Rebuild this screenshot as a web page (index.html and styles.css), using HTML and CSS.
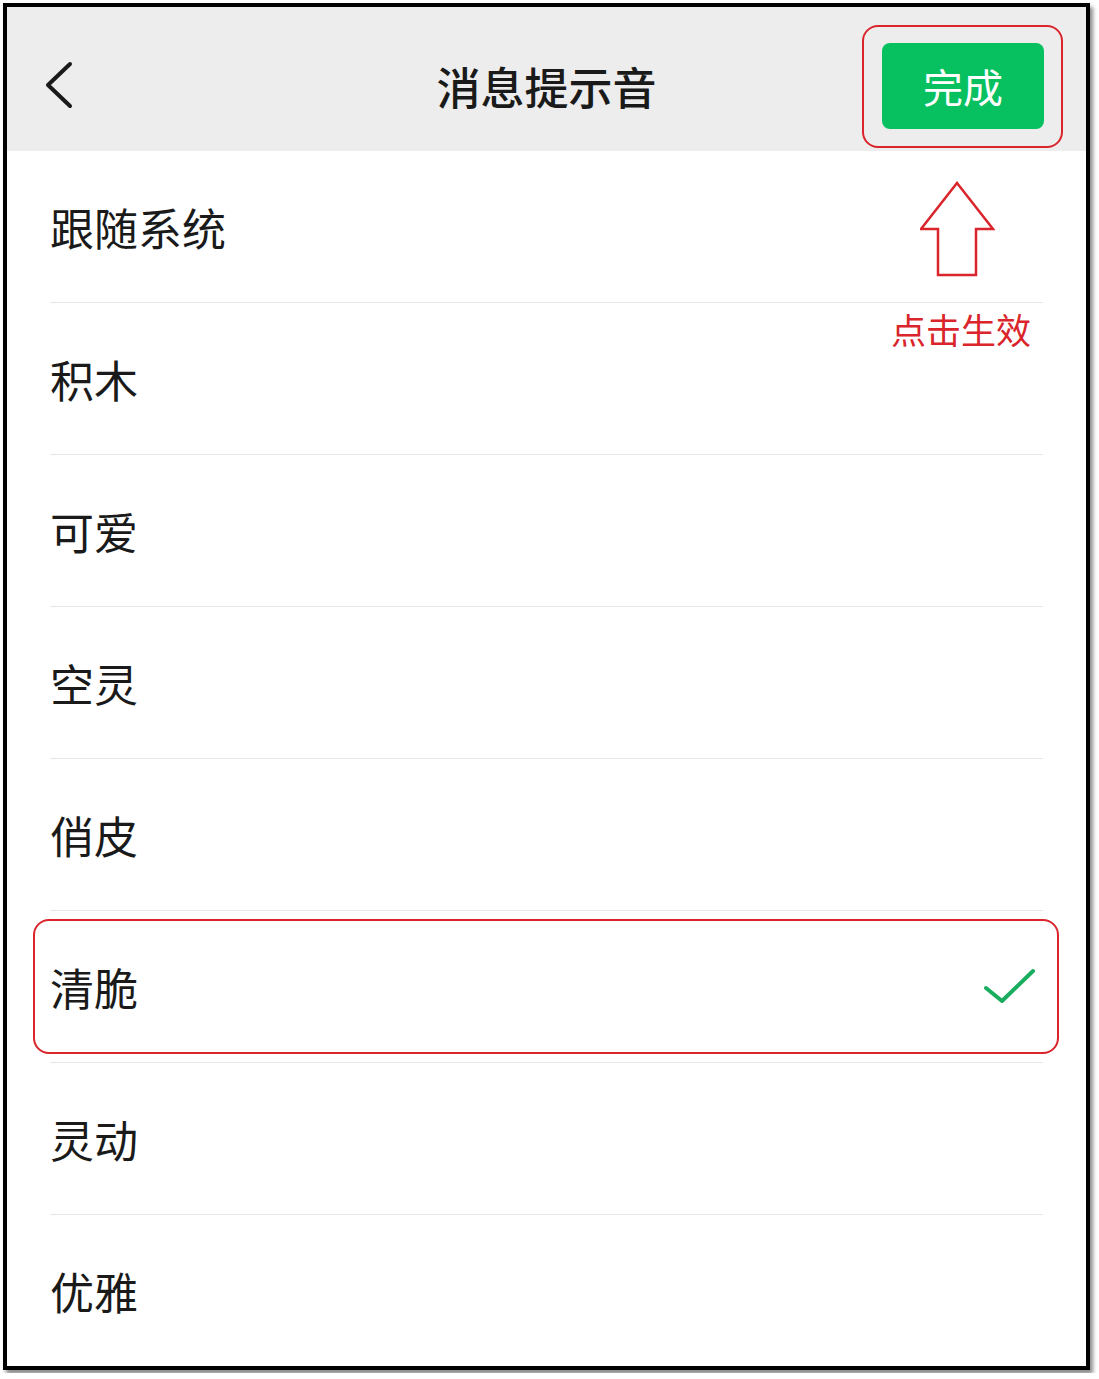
FILE: index.html
```html
<!DOCTYPE html>
<html lang="zh-CN">
<head>
    <meta charset="UTF-8">
    <meta name="viewport" content="width=device-width, initial-scale=1.0">
    <title>消息提示音</title>
    <link rel="stylesheet" href="styles.css">
</head>
<body>
    <div class="phone">
        <div class="header">
            <span class="back">
                <svg width="30" height="50" viewBox="0 0 30 50">
                    <polyline points="25,3 3,24 25,45" fill="none" stroke="#1a1a1a" stroke-width="4" stroke-linecap="round" stroke-linejoin="round"/>
                </svg>
            </span>
            <h1 class="title">消息提示音</h1>
            <span class="done-mark">
                <button class="done">完成</button>
            </span>
        </div>

        <div class="list">
            <!-- tip under the done button -->
            <div class="tip">
                <svg width="80" height="98" viewBox="0 0 80 98">
                    <polygon points="37,2 73,48 56,48 56,94 18,94 18,48 1,48" fill="none" stroke="#d9252b" stroke-width="2.5" stroke-linejoin="miter"/>
                </svg>
                <span class="tip-text">点击生效</span>
            </div>

            <div class="item">跟随系统</div>
            <div class="item">积木</div>
            <div class="item">可爱</div>
            <div class="item">空灵</div>
            <div class="item">俏皮</div>
            <div class="item selected">
                <span>清脆</span>
                <svg class="check" width="54" height="40" viewBox="0 0 54 40">
                    <polyline points="3,20 19,33 50,3" fill="none" stroke="#1aad5f" stroke-width="4" stroke-linecap="round" stroke-linejoin="round"/>
                </svg>
            </div>
            <div class="item">灵动</div>
            <div class="item">优雅</div>
        </div>
    </div>
</body>
</html>
```

FILE: styles.css
```css
body {
    margin: 0;
    padding: 0;
    background-color: #fff;
    font-family: "Noto Sans CJK SC", "Noto Sans", sans-serif;
    color: #1a1a1a;
}

.phone {
    width: 1079px;
    margin: 3px;
    border: 4px solid #000;
    background-color: #fff;
    box-shadow: 3px 4px 4px rgba(0, 0, 0, 0.45);
}

.header {
    height: 144px;
    box-sizing: border-box;
    padding-top: 14px;
    background-color: #ededed;
    display: grid;
    grid-template-columns: 1fr auto 1fr;
    align-items: center;
}

.back {
    padding-left: 38px;
    display: flex;
    align-items: center;
}

.title {
    margin: 0;
    font-size: 44px;
    font-weight: 500;
}

.done-mark {
    justify-self: end;
    margin-right: 23px;
    padding: 16px 17px 17px 18px;
    border: 2.5px solid #d9252b;
    border-radius: 16px;
    display: flex;
}

.done {
    width: 162px;
    height: 86px;
    border: none;
    border-radius: 8px;
    background-color: #07c160;
    color: #fff;
    font-family: inherit;
    font-size: 40px;
    padding: 0;
}

.list {
    position: relative;
}

.tip {
    position: absolute;
    top: 30px;
    right: 55px;
    display: flex;
    flex-direction: column;
    align-items: center;
}

.tip svg {
    margin-left: -2px;
}

.tip-text {
    color: #d9252b;
    font-size: 35px;
    margin-top: 24px;
}

.item {
    height: 151px;
    margin: 0 43px;
    border-bottom: 1px solid #e6e6e6;
    display: flex;
    align-items: center;
    justify-content: space-between;
    font-size: 44px;
}

.item:last-child {
    border-bottom: none;
}

.selected {
    position: relative;
}

.selected::after {
    content: "";
    position: absolute;
    top: 8px;
    bottom: 8px;
    left: -17px;
    right: -16px;
    border: 2.5px solid #d9252b;
    border-radius: 16px;
}

.check {
    margin-right: 6px;
    margin-top: 2px;
}
```
